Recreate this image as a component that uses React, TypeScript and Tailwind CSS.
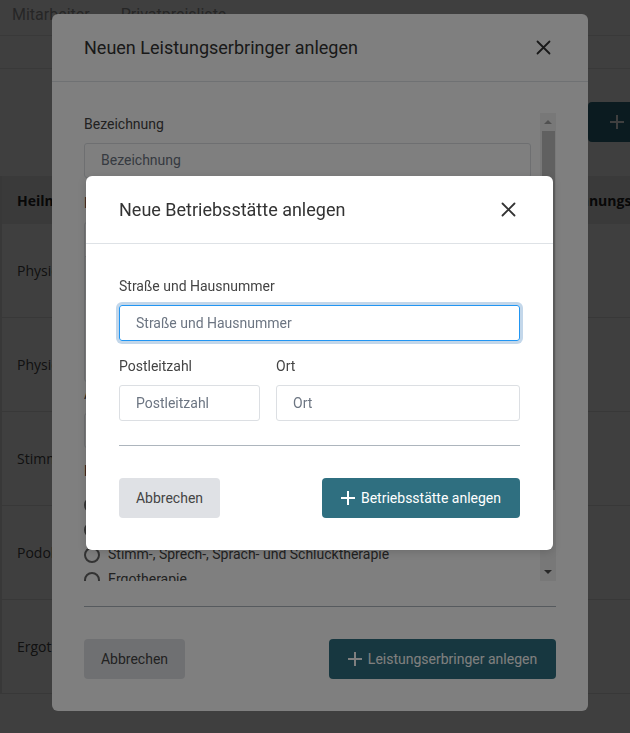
import React from 'react';

const rows = [
  'Physiotherapie',
  'Physiotherapie',
  'Stimm-, Sprech-, Sprach- und Schlucktherapie',
  'Podologie',
  'Ergotherapie',
];

const bereiche = [
  'Physiotherapie',
  'Podologie',
  'Stimm-, Sprech-, Sprach- und Schlucktherapie',
  'Ergotherapie',
];

const CloseIcon = () => (
  <svg width="15" height="15" viewBox="0 0 15 15" fill="none" stroke="#333" strokeWidth="1.8" strokeLinecap="round">
    <path d="M1.5 1.5 13.5 13.5M13.5 1.5 1.5 13.5" />
  </svg>
);

const PlusIcon = () => (
  <svg width="14" height="14" viewBox="0 0 14 14" fill="none" stroke="#fff" strokeWidth="2">
    <path d="M7 0v14M0 7h14" />
  </svg>
);

const Background: React.FC = () => (
  <div className="font-[Roboto,sans-serif]">
    {/* Reiter */}
    <div className="h-[36px] flex gap-[31px] pl-[12px] pt-[3px] text-[16px] leading-6 text-[#9a9a9a] border-b border-[#e6e6e6]">
      <span>Mitarbeiter</span>
      <span>Privatpreisliste</span>
    </div>
    <div className="h-[33px] border-b border-[#e6e6e6]" />
    <div className="h-[33px]" />
    <div className="flex overflow-hidden h-[40px]">
      <div className="w-[588px] shrink-0" />
      <button className="shrink-0 flex items-center gap-2 px-[22px] bg-[#2f6f80] text-white text-[14px] rounded-l whitespace-nowrap">
        <PlusIcon /> Leistungserbringer anlegen
      </button>
    </div>
    <div className="h-[34px]" />
    {/* Tabelle */}
    <div className="border-l-2 border-[#e3e3e3] font-['Open_Sans',sans-serif] text-[14px]">
      <div className="grid grid-cols-[250px_286px_1fr] h-[48px] items-center bg-[#e9e9e9] font-bold text-[#222] whitespace-nowrap">
        <div className="pl-[15px]">Heilmittelbereich</div>
        <div className="pl-[17px]">Bezeichnung</div>
        <div className="pl-[17px] overflow-hidden">Rechnungskreis</div>
      </div>
      {rows.map((r, i) => (
        <div key={i} className="grid grid-cols-[250px_286px_1fr] h-[94px] items-center border-b border-[#e3e3e3] text-[#444]">
          <div className="pl-[15px] whitespace-nowrap">{r}</div>
          <div />
          <div />
        </div>
      ))}
    </div>
  </div>
);

const Field: React.FC<{ label: string; className?: string }> = ({ label, className }) => (
  <div className={className}>
    <div className="text-[14px] leading-5 text-[#444]">{label}</div>
    <input
      placeholder={label}
      className="mt-[9px] w-full h-[36px] border border-[#dcdfe3] rounded-[3px] px-[16px] text-[14px] text-[#333] placeholder:text-[#6c7582] outline-none"
    />
  </div>
);

const OuterModal: React.FC = () => (
  <div className="ml-[52px] mt-[14px] w-[536px] h-[697px] bg-white rounded-md font-[Roboto,sans-serif]">
    <div className="h-[68px] flex items-center justify-between pl-[32px] pr-[37px] border-b border-[#dee2e6]">
      <h2 className="text-[18px] text-[#333]">Neuen Leistungserbringer anlegen</h2>
      <CloseIcon />
    </div>
    <div className="px-[32px] pt-[31px]">
      <div className="h-[468px] flex gap-[9px] overflow-hidden">
        <div className="w-[447px] shrink-0 text-[14px] text-[#444]">
          <div className="mt-px leading-5">Bezeichnung</div>
          <div className="mt-[9px] h-[35px] border border-[#dcdfe3] rounded-[3px] px-[16px] flex items-center text-[#6c7582]">Bezeichnung</div>
          <div className="mt-[15px] leading-5">Betriebsstätte</div>
          <div className="mt-[9px] h-[160px] border border-[#dcdfe3] rounded-[3px] flex flex-col">
            <div className="h-[34px] border-b border-[#dcdfe3]" />
            <div className="h-[43px] bg-[#eef0f2]" />
          </div>
          <div className="mt-[2px] leading-5">Adresse</div>
          <div className="mt-[9px] h-[35px] border border-[#dcdfe3] rounded-[3px]" />
          <div className="mt-[13px] leading-5 text-[#333]">Heilmittelbereich</div>
          <div className="mt-[11px]">
            {bereiche.map((b) => (
              <div key={b} className="h-[25px] flex items-center gap-[8px]">
                <span className="w-[16px] h-[16px] rounded-full border-2 border-[#666]" />
                <span>{b}</span>
              </div>
            ))}
          </div>
        </div>
        {/* Scrollleiste */}
        <div className="w-[16px] shrink-0 bg-[#f1f1f1] flex flex-col items-center">
          <div className="h-[18px] flex items-center justify-center">
            <span className="w-0 h-0 border-x-[4px] border-x-transparent border-b-[4px] border-b-[#a3a3a3]" />
          </div>
          <div className="w-[13px] h-[359px] bg-[#c1c1c1]" />
          <div className="flex-1" />
          <div className="h-[18px] flex items-center justify-center">
            <span className="w-0 h-0 border-x-[4px] border-x-transparent border-t-[4px] border-t-[#505050]" />
          </div>
        </div>
      </div>
      <div className="mt-[25px] h-px bg-[#adb5bd]" />
      <div className="mt-[32px] flex justify-between">
        <button className="w-[101px] h-[40px] rounded bg-[#dfe1e5] text-[14px] text-[#444]">Abbrechen</button>
        <button className="w-[227px] h-[40px] rounded bg-[#2f6f80] text-[14px] text-white flex items-center justify-center gap-[6px]">
          <PlusIcon />
          Leistungserbringer anlegen
        </button>
      </div>
    </div>
  </div>
);

const InnerModal: React.FC = () => (
  <div className="ml-[86px] mt-[176px] w-[467px] bg-white rounded-md shadow-[0_2px_8px_rgba(0,0,0,0.15)] font-[Roboto,sans-serif]">
    <div className="h-[68px] flex items-center justify-between pl-[33px] pr-[37px] border-b border-[#dee2e6]">
      <h2 className="text-[18px] text-[#333]">Neue Betriebsstätte anlegen</h2>
      <CloseIcon />
    </div>
    <div className="px-[33px] pt-[32px] pb-[32px]">
      <div className="text-[14px] leading-5 text-[#444]">Straße und Hausnummer</div>
      <input
        autoFocus
        placeholder="Straße und Hausnummer"
        className="mt-[9px] w-full h-[36px] border border-[#2196f3] rounded-[3px] px-[16px] text-[14px] text-[#333] placeholder:text-[#6c7582] outline-none shadow-[0_0_0_3px_#c3d7ea] caret-[#333]"
      />
      <div className="mt-[15px] flex gap-[16px]">
        <Field label="Postleitzahl" className="w-[141px]" />
        <Field label="Ort" className="flex-1" />
      </div>
      <div className="mt-[24px] h-px bg-[#adb5bd]" />
      <div className="mt-[32px] flex justify-between">
        <button className="w-[101px] h-[40px] rounded bg-[#dfe1e5] text-[14px] text-[#444]">Abbrechen</button>
        <button className="w-[198px] h-[40px] rounded bg-[#2f6f80] text-[14px] text-white flex items-center justify-center gap-[6px]">
          <PlusIcon />
          Betriebsstätte anlegen
        </button>
      </div>
    </div>
  </div>
);

export default function App() {
  return (
    <div className="relative h-[733px] overflow-hidden bg-white">
      <Background />
      <div className="fixed inset-0 bg-black/50" />
      <div className="fixed inset-0">
        <OuterModal />
      </div>
      <div className="fixed inset-0 bg-black/50" />
      <div className="fixed inset-0">
        <InnerModal />
      </div>
    </div>
  );
}
